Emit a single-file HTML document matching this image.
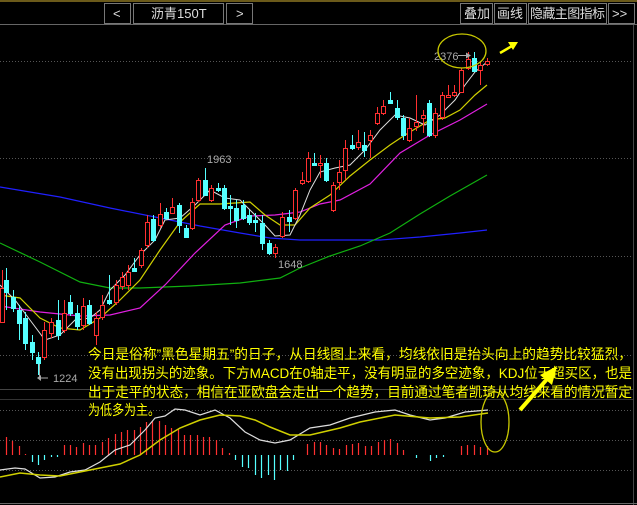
<!DOCTYPE html><html><head><meta charset="utf-8"><style>
html,body{margin:0;padding:0;background:#000;width:637px;height:505px;overflow:hidden}
svg{display:block}
.btn{fill:#000;stroke:#777;stroke-width:1}
.bt{fill:#ddd;font-family:"Liberation Sans","Noto Sans CJK SC",sans-serif;font-size:13px}
.tx{fill:#ffff00;font-family:"Liberation Sans","Noto Sans CJK SC",sans-serif;font-size:14px}
.lb{fill:#aaa;font-family:"Liberation Sans",sans-serif;font-size:11px}
</style></head><body>
<svg width="637" height="505" viewBox="0 0 637 505" xmlns="http://www.w3.org/2000/svg">
<rect x="0" y="0" width="637" height="2" fill="#6b5a1a"/>
<line x1="0" y1="24.5" x2="637" y2="24.5" stroke="#666"/>
<rect class="btn" x="104.5" y="3.5" width="26" height="20"/><text class="bt" x="113" y="18">&lt;</text>
<rect class="btn" x="133.5" y="3.5" width="90" height="20"/><text class="bt" x="151" y="18">沥青150T</text>
<rect class="btn" x="226.5" y="3.5" width="26" height="20"/><text class="bt" x="236" y="18">&gt;</text>
<rect class="btn" x="460.5" y="3.5" width="32" height="20"/><text class="bt" x="464" y="18">叠加</text>
<rect class="btn" x="494.5" y="3.5" width="32" height="20"/><text class="bt" x="497" y="18">画线</text>
<rect class="btn" x="528.5" y="3.5" width="78" height="20"/><text class="bt" x="530" y="18" textLength="75">隐藏主图指标</text>
<rect class="btn" x="608.5" y="3.5" width="26" height="20"/><text class="bt" x="612" y="18">&gt;&gt;</text>
<line x1="633.5" y1="25" x2="633.5" y2="505" stroke="#444"/>
<g stroke="#555" stroke-dasharray="1,2">
<line x1="0" y1="61.5" x2="633" y2="61.5"/><line x1="0" y1="158.5" x2="633" y2="158.5"/>
<line x1="0" y1="256.5" x2="633" y2="256.5"/><line x1="0" y1="355.5" x2="633" y2="355.5"/>
<line x1="0" y1="410.5" x2="633" y2="410.5"/><line x1="0" y1="440.5" x2="633" y2="440.5"/>
<line x1="0" y1="470.5" x2="633" y2="470.5"/>
</g>
<line x1="0" y1="389.5" x2="633" y2="389.5" stroke="#444"/>
<line x1="0" y1="399.5" x2="633" y2="399.5" stroke="#333"/>
<line x1="0" y1="503.5" x2="637" y2="503.5" stroke="#666"/>
<!-- MAs -->
<polyline fill="none" stroke="#2020ff" stroke-width="1.2" points="0,187 60,197 110,208 160,218 200,226 240,233 270,238 300,240 340,240 380,240 420,237 460,233 487,230"/>
<polyline fill="none" stroke="#10b010" stroke-width="1.2" points="0,243 40,262 80,282 110,288 140,288 190,286 240,283 280,278 300,268 330,256 360,246 390,233 420,214 450,196 487,175"/>
<polyline fill="none" stroke="#e020e0" stroke-width="1.2" points="0,306 40,312 80,316 110,315 140,308 165,285 195,253 225,225 250,216 275,215 300,212 320,204 340,200 370,184 400,153 430,135 460,120 487,104"/>
<polyline fill="none" stroke="#d0d000" stroke-width="1.2" points="0,295 20,298 40,318 60,328 80,330 100,318 120,300 140,280 160,250 180,222 200,204 220,204 250,202 265,215 280,225 295,225 310,208 330,195 350,176 370,160 390,145 405,135 430,120 445,118 460,110 475,95 487,85"/>
<polyline fill="none" stroke="#ddd" stroke-width="1" points="0,285 15,300 30,320 45,340 60,335 75,320 90,318 100,310 110,290 125,275 140,255 155,240 165,220 180,218 195,205 210,190 225,198 240,200 255,215 265,225 275,236 290,235 300,215 310,190 320,172 335,168 350,165 365,150 380,130 395,115 410,118 425,125 440,115 455,100 465,85 475,72 487,62"/>
<!-- candles -->
<g id="c"></g>
<g stroke="#ff3030" fill="#000" stroke-width="1">
<path d="M2.5,270V322M44.5,322V360M51.5,318V338M64.5,300V333M83.5,298V330M96.5,312V345M102.5,295V320M116.5,280V305M122.5,272V290M128.5,265V290M141.5,248V268M147.5,215V248M160.5,203V228M172.5,198V214M192.5,198V230M198.5,178V202M211.5,185V202M275.5,244V258M282.5,212V238M295.5,188V220M302.5,172V185M308.5,152V183M320.5,155V178M333.5,182V212M339.5,160V190M345.5,140V180M358.5,130V150M370.5,130V158M377.5,107V125M383.5,100V115M409.5,118V142M416.5,95V131M423.5,110V133M435.5,108V138M442.5,92V120M448.5,85V98M454.5,85V97M461.5,68V93M468.5,52V70M480.5,62V85M487.5,58V66"/>
<rect x="0.5" y="288.5" width="4" height="34"/><rect x="42.5" y="330.5" width="4" height="27"/><rect x="49.5" y="322.5" width="4" height="11"/><rect x="62.5" y="313.5" width="4" height="17"/><rect x="81.5" y="306.5" width="4" height="19"/><rect x="94.5" y="318.5" width="4" height="17"/><rect x="100.5" y="305.5" width="4" height="12"/><rect x="114.5" y="285.5" width="4" height="17"/><rect x="120.5" y="277.5" width="4" height="9"/><rect x="126.5" y="272.5" width="4" height="13"/><rect x="139.5" y="250.5" width="4" height="15"/><rect x="145.5" y="222.5" width="4" height="23"/><rect x="158.5" y="214.5" width="4" height="11"/><rect x="170.5" y="207.5" width="4" height="6"/><rect x="190.5" y="202.5" width="4" height="26"/><rect x="196.5" y="180.5" width="4" height="20"/><rect x="209.5" y="188.5" width="4" height="12"/><rect x="273.5" y="247.5" width="4" height="6"/><rect x="280.5" y="217.5" width="4" height="19"/><rect x="293.5" y="190.5" width="4" height="28"/><rect x="300.5" y="180.5" width="4" height="3"/><rect x="306.5" y="158.5" width="4" height="23"/><rect x="318.5" y="163.5" width="4" height="2"/><rect x="331.5" y="185.5" width="4" height="25"/><rect x="337.5" y="172.5" width="4" height="10"/><rect x="343.5" y="148.5" width="4" height="22"/><rect x="356.5" y="142.5" width="4" height="5"/><rect x="368.5" y="135.5" width="4" height="5"/><rect x="375.5" y="113.5" width="4" height="10"/><rect x="381.5" y="106.5" width="4" height="7"/><rect x="407.5" y="128.5" width="4" height="12"/><rect x="414.5" y="122.5" width="4" height="4"/><rect x="421.5" y="115.5" width="4" height="3"/><rect x="433.5" y="113.5" width="4" height="22"/><rect x="440.5" y="95.5" width="4" height="22"/><rect x="446.5" y="95.5" width="4" height="2"/><rect x="452.5" y="92.5" width="4" height="3"/><rect x="459.5" y="70.5" width="4" height="22"/><rect x="466.5" y="59.5" width="4" height="9"/><rect x="478.5" y="65.5" width="4" height="5"/><rect x="485.5" y="61.5" width="4" height="3"/>
</g>
<g stroke="#55ffff" fill="#55ffff" stroke-width="1">
<path d="M6.5,268V310M13.5,290V312M19.5,305V340M25.5,312V350M32.5,335V360M38.5,352V375M58.5,300V340M70.5,295V316M77.5,305V330M89.5,300V325M109.5,275V305M134.5,258V272M153.5,215V242M166.5,208V220M179.5,203V233M186.5,225V238M205.5,168V196M218.5,183V192M224.5,185V210M230.5,195V225M236.5,200V228M243.5,200V220M249.5,210V225M255.5,213V232M262.5,215V250M269.5,240V255M289.5,210V232M314.5,153V166M326.5,158V182M352.5,135V150M364.5,132V157M390.5,92V104M397.5,100V120M403.5,115V140M429.5,100V137M474.5,52V72"/>
<rect x="4.5" y="280.5" width="4" height="12"/><rect x="11.5" y="297.5" width="4" height="11"/><rect x="17.5" y="310.5" width="4" height="13"/><rect x="23.5" y="318.5" width="4" height="25"/><rect x="30.5" y="342.5" width="4" height="10"/><rect x="36.5" y="357.5" width="4" height="6"/><rect x="56.5" y="320.5" width="4" height="15"/><rect x="68.5" y="302.5" width="4" height="11"/><rect x="75.5" y="313.5" width="4" height="13"/><rect x="87.5" y="305.5" width="4" height="18"/><rect x="107.5" y="300.5" width="4" height="3"/><rect x="132.5" y="268.5" width="4" height="3"/><rect x="151.5" y="219.5" width="4" height="21"/><rect x="164.5" y="212.5" width="4" height="6"/><rect x="177.5" y="205.5" width="4" height="20"/><rect x="184.5" y="228.5" width="4" height="9"/><rect x="203.5" y="180.5" width="4" height="15"/><rect x="216.5" y="188.5" width="4" height="2"/><rect x="222.5" y="188.5" width="4" height="20"/><rect x="228.5" y="206.5" width="4" height="2"/><rect x="234.5" y="208.5" width="4" height="12"/><rect x="241.5" y="205.5" width="4" height="13"/><rect x="247.5" y="215.5" width="4" height="7"/><rect x="253.5" y="220.5" width="4" height="2"/><rect x="260.5" y="223.5" width="4" height="20"/><rect x="267.5" y="243.5" width="4" height="10"/><rect x="287.5" y="217.5" width="4" height="4"/><rect x="312.5" y="163.5" width="4" height="2"/><rect x="324.5" y="163.5" width="4" height="17"/><rect x="350.5" y="145.5" width="4" height="3"/><rect x="362.5" y="145.5" width="4" height="5"/><rect x="388.5" y="100.5" width="4" height="3"/><rect x="395.5" y="108.5" width="4" height="9"/><rect x="401.5" y="118.5" width="4" height="17"/><rect x="427.5" y="103.5" width="4" height="32"/><rect x="472.5" y="58.5" width="4" height="13"/>
</g>
<!-- labels -->
<text class="lb" x="434" y="60">2376</text><path d="M458,55.5H470" stroke="#aaa"/><path d="M466,52.5L471,55.5L466,58.5Z" fill="#aaa"/>
<text class="lb" x="207" y="163">1963</text>
<text class="lb" x="278" y="268">1648</text>
<path d="M39.5,364V378H48" stroke="#aaa" fill="none"/><path d="M41,375L37,378L41,381Z" fill="#aaa"/><text class="lb" x="53" y="382">1224</text>
<ellipse cx="462" cy="51" rx="24" ry="17" fill="none" stroke="#c8c800" stroke-width="1.3"/>
<path d="M500,53L512,46" stroke="#ffff00" stroke-width="2.5"/><path d="M508,42L518,42L513,50Z" fill="#ffff00"/>
<!-- text -->
<text class="tx" x="88" y="359" textLength="544" lengthAdjust="spacingAndGlyphs">今日是俗称”黑色星期五”的日子，从日线图上来看，均线依旧是抬头向上的趋势比较猛烈，</text>
<text class="tx" x="88" y="378" textLength="544" lengthAdjust="spacingAndGlyphs">没有出现拐头的迹象。下方MACD在0轴走平，没有明显的多空迹象，KDJ位于超买区，也是</text>
<text class="tx" x="88" y="397" textLength="544" lengthAdjust="spacingAndGlyphs">出于走平的状态，相信在亚欧盘会走出一个趋势，目前通过笔者凯琦从均线来看的情况暂定</text>
<text class="tx" x="88" y="415" textLength="72" lengthAdjust="spacingAndGlyphs">为低多为主。</text>
<!-- MACD bars -->
<g stroke="#ff3030" stroke-width="1.2">
<path d="M6.5,455V437M12.5,455V441M19.5,455V446M25.5,455V454M64.5,455V445M70.5,455V445M76.5,455V447M83.5,455V443M89.5,455V445M95.5,455V445M102.5,455V442M108.5,455V438M115.5,455V434M121.5,455V432M127.5,455V430M134.5,455V430M140.5,455V427M146.5,455V422M152.5,455V421M159.5,455V421M165.5,455V425M171.5,455V428M178.5,455V429M184.5,455V435M190.5,455V435M197.5,455V435M203.5,455V437M209.5,455V437M216.5,455V440M222.5,455V448M229.5,455V453M307.5,455V444M314.5,455V442M320.5,455V442M326.5,455V445M333.5,455V448M339.5,455V449M346.5,455V445M352.5,455V444M358.5,455V443M365.5,455V446M371.5,455V446M378.5,455V442M384.5,455V440M390.5,455V439M397.5,455V443M403.5,455V450M461.5,455V446M467.5,455V445M474.5,455V445M480.5,455V447M487.5,455V446"/>
</g>
<g stroke="#55ffff" stroke-width="1.2">
<path d="M32.5,455V462M38.5,455V465M44.5,455V460M51.5,455V457M57.5,455V457M235.5,455V460M242.5,455V467M248.5,455V468M255.5,455V475M261.5,455V478M268.5,455V475M274.5,455V480M280.5,455V470M287.5,455V471M293.5,455V460M416.5,455V458M430.5,455V461M436.5,455V458M443.5,455V457"/>
</g>
<polyline fill="none" stroke="#ddd" stroke-width="1.2" points="0,470 15,468 25,469 40,478 55,477 70,472 85,470 100,462 115,450 130,445 145,430 155,418 165,416 175,409 185,410 200,415 215,410 230,418 245,432 260,440 275,443 290,440 310,428 330,425 350,418 375,412 395,410 410,415 430,420 445,418 465,412 488,410"/>
<polyline fill="none" stroke="#d0d000" stroke-width="1.5" points="0,477 20,473 40,475 60,476 80,472 100,468 120,464 140,455 160,440 180,428 200,420 220,415 240,416 255,420 270,427 290,435 310,435 340,428 360,422 395,415 430,418 460,417 488,413"/>
<ellipse cx="495" cy="422" rx="14" ry="30" fill="none" stroke="#c8c800" stroke-width="1.3"/>
<path d="M520,410L548,378" stroke="#ffff00" stroke-width="4"/><path d="M540,375L557,366L552,385Z" fill="#ffff00"/>
</svg>
</body></html>
